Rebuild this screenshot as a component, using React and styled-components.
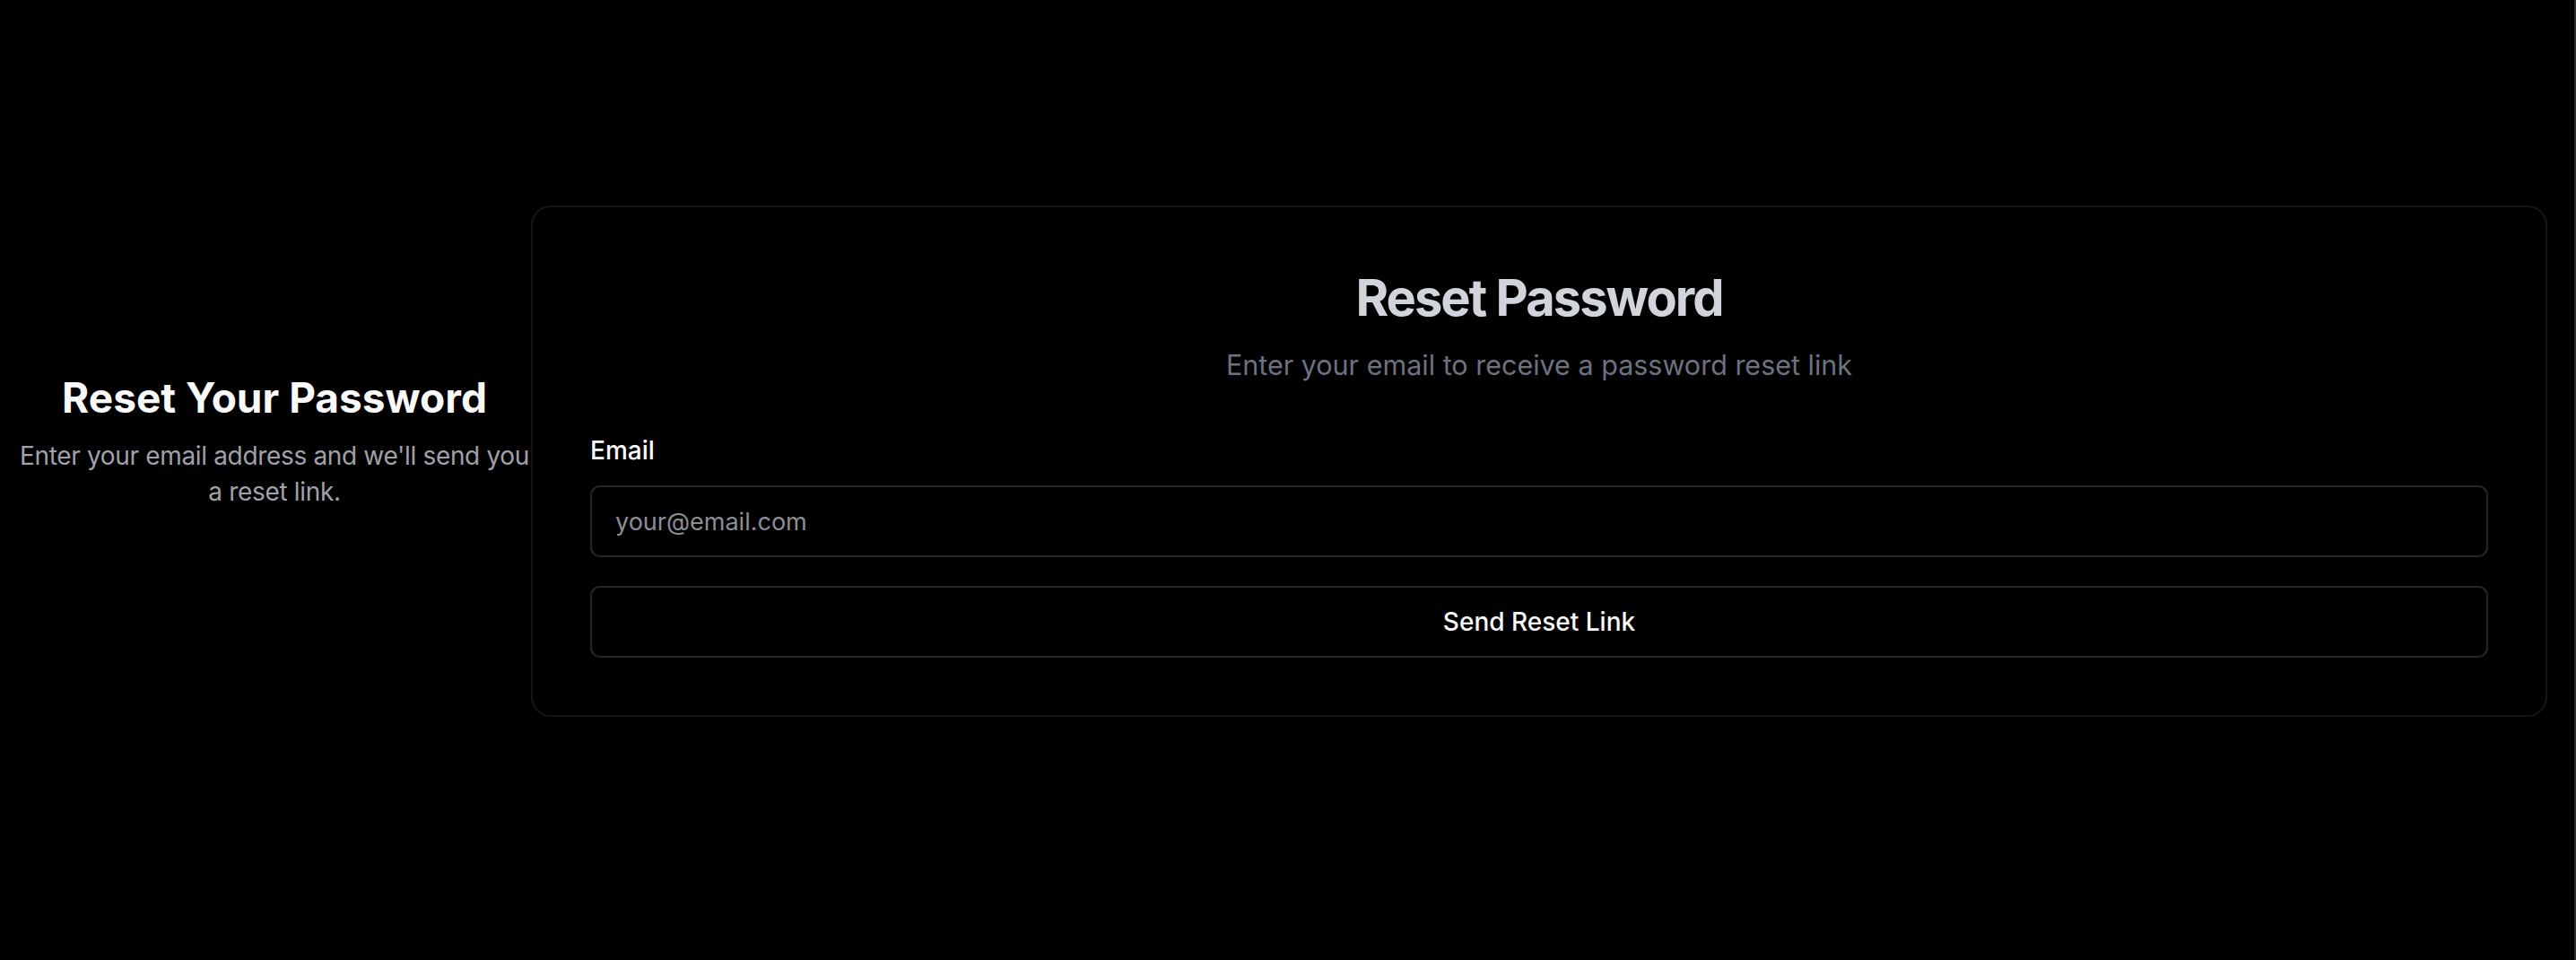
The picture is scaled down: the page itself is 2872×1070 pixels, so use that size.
import styled, { createGlobalStyle } from 'styled-components';

const GlobalStyle = createGlobalStyle`
    html, body {
        margin: 0;
        padding: 0;
        background: #000;
    }
    body {
        font-family: Inter, "Noto Sans", "Liberation Sans", sans-serif;
        -webkit-font-smoothing: antialiased;
    }
    * {
        box-sizing: border-box;
    }
`;

const Page = styled.div`
    min-height: 100vh;
    background: #000;
    border-right: 2px solid #2c2c2c;
    display: flex;
    align-items: flex-start;
    padding-top: 229px;
    padding-right: 30px;
`;

const Row = styled.div`
    flex: 1;
    display: flex;
    align-items: center;
`;

const Intro = styled.div`
    width: 592px;
    flex-shrink: 0;
    padding-left: 20px;
    padding-bottom: 44px;
    text-align: center;
`;

const IntroTitle = styled.h1`
    margin: 0;
    font-size: 46px;
    line-height: 53px;
    font-weight: 700;
    color: #fafafa;
`;

const IntroText = styled.p`
    margin: 18px 0 0;
    font-size: 28px;
    line-height: 40px;
    letter-spacing: -0.012em;
    color: #a1a1aa;
`;

const Card = styled.div`
    flex: 1;
    border: 2px solid #161616;
    border-radius: 22px;
    padding: 68px 64px 64px;
    background: #000;
`;

const Header = styled.div`
    text-align: center;
    margin-bottom: 53px;
`;

const Title = styled.h2`
    margin: 0;
    font-size: 56px;
    line-height: 66px;
    font-weight: 700;
    letter-spacing: -0.035em;
    color: #d1d5db;
`;

const Subtitle = styled.p`
    margin: 20px 0 0;
    font-size: 30.5px;
    line-height: 44px;
    color: #6b7280;
`;

const Form = styled.form`
    display: flex;
    flex-direction: column;
`;

const Label = styled.label`
    font-size: 28px;
    line-height: 40px;
    font-weight: 500;
    color: #fafafa;
    margin-bottom: 19px;
`;

const Input = styled.input`
    height: 80px;
    width: 100%;
    padding: 0 26px;
    border: 2px solid #262626;
    border-radius: 11px;
    background: #000;
    color: #fafafa;
    font-family: inherit;
    font-size: 27px;
    outline: none;

    &::placeholder {
        color: #8d8d94;
    }
`;

const Button = styled.button`
    margin-top: 32px;
    height: 80px;
    width: 100%;
    border: 2px solid #262626;
    border-radius: 11px;
    background: #000;
    color: #fafafa;
    font-family: inherit;
    font-size: 28px;
    font-weight: 500;
    cursor: pointer;
`;

const App = () => {
    return (
        <>
            <GlobalStyle />
            <Page>
                <Row>
                    <Intro>
                        <IntroTitle>Reset Your Password</IntroTitle>
                        <IntroText>Enter your email address and we'll send you a reset link.</IntroText>
                    </Intro>
                    <Card>
                        <Header>
                            <Title>Reset Password</Title>
                            <Subtitle>Enter your email to receive a password reset link</Subtitle>
                        </Header>
                        <Form onSubmit={(e) => e.preventDefault()}>
                            <Label htmlFor="email">Email</Label>
                            <Input id="email" type="email" placeholder="your@email.com" />
                            <Button type="submit">Send Reset Link</Button>
                        </Form>
                    </Card>
                </Row>
            </Page>
        </>
    );
};

export default App;
